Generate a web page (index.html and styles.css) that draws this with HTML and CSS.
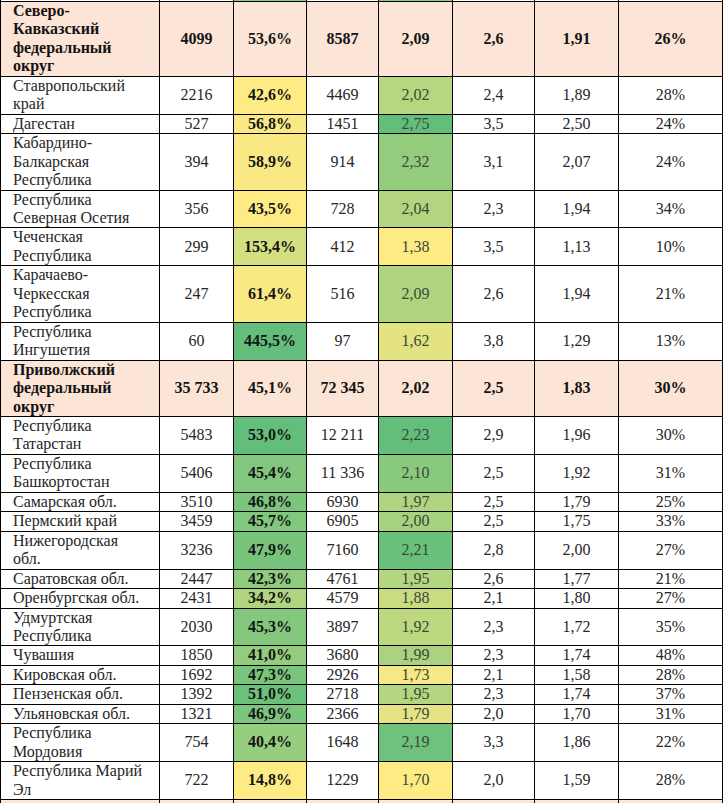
FILE: index.html
```html
<!DOCTYPE html>
<html lang="ru">
<head>
<meta charset="utf-8">
<title>Федеральные округа</title>
<link rel="stylesheet" href="styles.css">
</head>
<body>
<table class="stats">
  <colgroup>
    <col class="w-name"><col class="w-a"><col class="w-b"><col class="w-c"><col class="w-d"><col class="w-e"><col class="w-f"><col class="w-g">
  </colgroup>
  <tbody>
    <tr class="cut"><td></td><td></td><td style="background:#94cc7e"></td><td></td><td style="background:#94cc7e"></td><td></td><td></td><td></td></tr>
    <tr class="district"><td class="name">Северо-Кавказский федеральный округ</td><td>4099</td><td>53,6%</td><td>8587</td><td>2,09</td><td>2,6</td><td>1,91</td><td>26%</td></tr>
    <tr><td class="name">Ставропольский край</td><td>2216</td><td class="pct" style="background:#ffeb84">42,6%</td><td>4469</td><td class="ratio" style="background:#b6d680">2,02</td><td>2,4</td><td>1,89</td><td>28%</td></tr>
    <tr><td class="name">Дагестан</td><td>527</td><td class="pct" style="background:#f9e984">56,8%</td><td>1451</td><td class="ratio" style="background:#63be7b">2,75</td><td>3,5</td><td>2,50</td><td>24%</td></tr>
    <tr><td class="name">Кабардино-Балкарская Республика</td><td>394</td><td class="pct" style="background:#f9e984">58,9%</td><td>914</td><td class="ratio" style="background:#94cc7e">2,32</td><td>3,1</td><td>2,07</td><td>24%</td></tr>
    <tr><td class="name">Республика Северная Осетия</td><td>356</td><td class="pct" style="background:#ffeb84">43,5%</td><td>728</td><td class="ratio" style="background:#b4d580">2,04</td><td>2,3</td><td>1,94</td><td>34%</td></tr>
    <tr><td class="name">Чеченская Республика</td><td>299</td><td class="pct" style="background:#d4df82">153,4%</td><td>412</td><td class="ratio" style="background:#ffeb84">1,38</td><td>3,5</td><td>1,13</td><td>10%</td></tr>
    <tr><td class="name">Карачаево-Черкесская Республика</td><td>247</td><td class="pct" style="background:#f8e984">61,4%</td><td>516</td><td class="ratio" style="background:#aed47f">2,09</td><td>2,6</td><td>1,94</td><td>21%</td></tr>
    <tr><td class="name">Республика Ингушетия</td><td>60</td><td class="pct" style="background:#63be7b">445,5%</td><td>97</td><td class="ratio" style="background:#e4e382">1,62</td><td>3,8</td><td>1,29</td><td>13%</td></tr>
    <tr class="district"><td class="name">Приволжский федеральный округ</td><td>35 733</td><td>45,1%</td><td>72 345</td><td>2,02</td><td>2,5</td><td>1,83</td><td>30%</td></tr>
    <tr><td class="name">Республика Татарстан</td><td>5483</td><td class="pct" style="background:#63be7b">53,0%</td><td>12 211</td><td class="ratio" style="background:#63be7b">2,23</td><td>2,9</td><td>1,96</td><td>30%</td></tr>
    <tr><td class="name">Республика Башкортостан</td><td>5406</td><td class="pct" style="background:#82c77d">45,4%</td><td>11 336</td><td class="ratio" style="background:#89c97d">2,10</td><td>2,5</td><td>1,92</td><td>31%</td></tr>
    <tr><td class="name">Самарская обл.</td><td>3510</td><td class="pct" style="background:#7cc57c">46,8%</td><td>6930</td><td class="ratio" style="background:#b0d47f">1,97</td><td>2,5</td><td>1,79</td><td>25%</td></tr>
    <tr><td class="name">Пермский край</td><td>3459</td><td class="pct" style="background:#81c77d">45,7%</td><td>6905</td><td class="ratio" style="background:#a7d27f">2,00</td><td>2,5</td><td>1,75</td><td>33%</td></tr>
    <tr><td class="name">Нижегородская обл.</td><td>3236</td><td class="pct" style="background:#78c47c">47,9%</td><td>7160</td><td class="ratio" style="background:#69c07b">2,21</td><td>2,8</td><td>2,00</td><td>27%</td></tr>
    <tr><td class="name">Саратовская обл.</td><td>2447</td><td class="pct" style="background:#8fcb7e">42,3%</td><td>4761</td><td class="ratio" style="background:#b5d680">1,95</td><td>2,6</td><td>1,77</td><td>21%</td></tr>
    <tr><td class="name">Оренбургская обл.</td><td>2431</td><td class="pct" style="background:#b0d47f">34,2%</td><td>4579</td><td class="ratio" style="background:#cadc81">1,88</td><td>2,1</td><td>1,80</td><td>27%</td></tr>
    <tr><td class="name">Удмуртская Республика</td><td>2030</td><td class="pct" style="background:#83c77d">45,3%</td><td>3897</td><td class="ratio" style="background:#bed880">1,92</td><td>2,3</td><td>1,72</td><td>35%</td></tr>
    <tr><td class="name">Чувашия</td><td>1850</td><td class="pct" style="background:#94cc7e">41,0%</td><td>3680</td><td class="ratio" style="background:#aad27f">1,99</td><td>2,3</td><td>1,74</td><td>48%</td></tr>
    <tr><td class="name">Кировская обл.</td><td>1692</td><td class="pct" style="background:#7ac57c">47,3%</td><td>2926</td><td class="ratio" style="background:#f6e884">1,73</td><td>2,1</td><td>1,58</td><td>28%</td></tr>
    <tr><td class="name">Пензенская обл.</td><td>1392</td><td class="pct" style="background:#6bc07c">51,0%</td><td>2718</td><td class="ratio" style="background:#b5d680">1,95</td><td>2,3</td><td>1,74</td><td>37%</td></tr>
    <tr><td class="name">Ульяновская обл.</td><td>1321</td><td class="pct" style="background:#7cc57c">46,9%</td><td>2366</td><td class="ratio" style="background:#e5e383">1,79</td><td>2,0</td><td>1,70</td><td>31%</td></tr>
    <tr><td class="name">Республика Мордовия</td><td>754</td><td class="pct" style="background:#97cd7e">40,4%</td><td>1648</td><td class="ratio" style="background:#6fc17c">2,19</td><td>3,3</td><td>1,86</td><td>22%</td></tr>
    <tr><td class="name">Республика Марий Эл</td><td>722</td><td class="pct" style="background:#ffeb84">14,8%</td><td>1229</td><td class="ratio" style="background:#ffeb84">1,70</td><td>2,0</td><td>1,59</td><td>28%</td></tr>
    <tr class="district"><td class="name">&nbsp;</td><td></td><td></td><td></td><td></td><td></td><td></td><td></td></tr>
  </tbody>
</table>
</body>
</html>
```

FILE: styles.css
```css
html, body {
  margin: 0;
  padding: 0;
  background: #ffffff;
}

.stats {
  border-collapse: collapse;
  table-layout: fixed;
  width: 723px;
  font-family: "Liberation Serif", "Times New Roman", serif;
  font-size: 16px;
  color: #262626;
}

.w-name { width: 159px; }
.w-a { width: 74px; }
.w-b { width: 73px; }
.w-c { width: 72px; }
.w-d { width: 74px; }
.w-e { width: 82px; }
.w-f { width: 84px; }
.w-g { width: 104px; }

.stats td {
  border: 1px solid #000000;
  padding: 0 3px;
  text-align: center;
  vertical-align: middle;
  line-height: 18.45px;
  white-space: normal;
}

.stats td.name {
  text-align: left;
  padding: 0 12px;
}

.district td {
  background: #fce4d6;
  font-weight: bold;
  color: #141414;
}

.stats td.pct {
  font-weight: bold;
  color: #141414;
}

.stats td.ratio {
  color: #3a4838;
}

.cut td {
  height: 1px;
  padding: 0;
  border-top: none;
  font-size: 0;
  line-height: 0;
}
```
